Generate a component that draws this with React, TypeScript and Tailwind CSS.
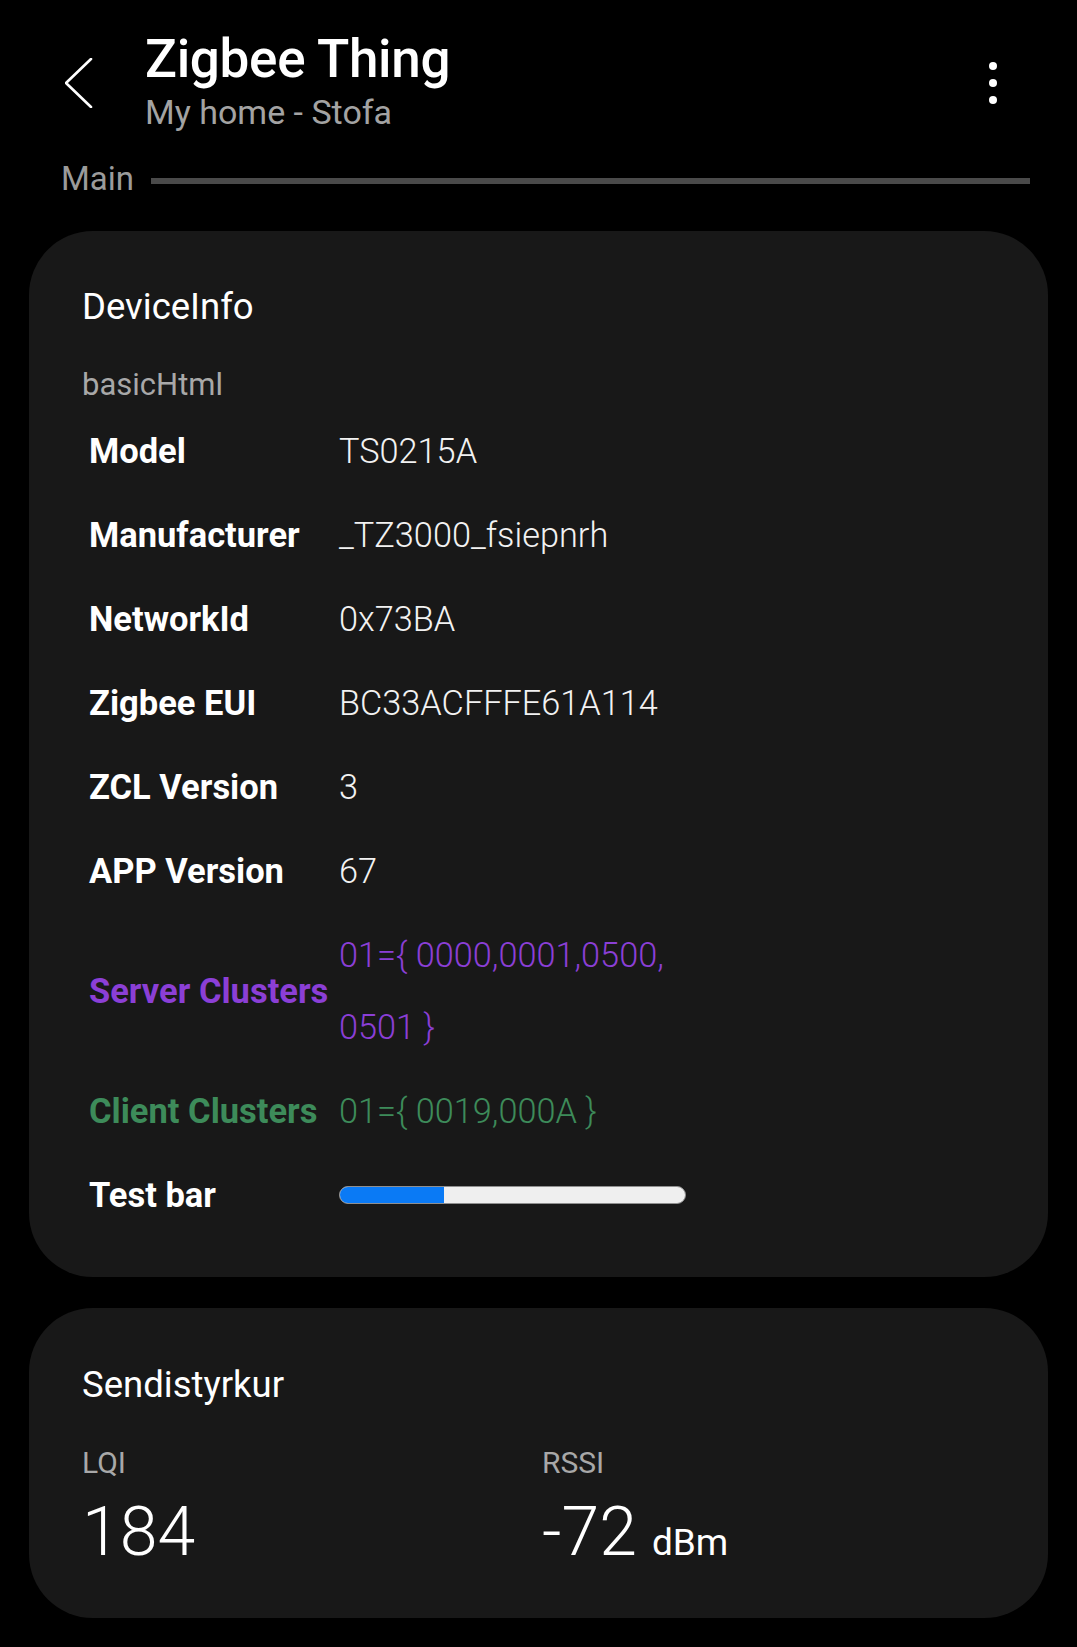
import React from "react";

type Row = {
  label: string;
  value: React.ReactNode;
  tone?: "purple" | "green";
};

const rows: Row[] = [
  { label: "Model", value: "TS0215A" },
  { label: "Manufacturer", value: "_TZ3000_fsiepnrh" },
  { label: "NetworkId", value: "0x73BA" },
  { label: "Zigbee EUI", value: "BC33ACFFFE61A114" },
  { label: "ZCL Version", value: "3" },
  { label: "APP Version", value: "67" },
  {
    label: "Server Clusters",
    value: (
      <>
        01={"{"} 0000,0001,0500,
        <br />
        0501 {"}"}
      </>
    ),
    tone: "purple",
  },
  { label: "Client Clusters", value: <>01={"{"} 0019,000A {"}"}</>, tone: "green" },
];

function InfoRow({ label, value, tone }: Row) {
  const labelColor =
    tone === "purple" ? "text-[#8b3fd6]" : tone === "green" ? "text-[#3d8b5a]" : "text-white";
  const valueColor =
    tone === "purple" ? "text-[#8b3fd6]" : tone === "green" ? "text-[#3d8b5a]" : "text-[#f2f2f2]";
  return (
    <div className="flex items-center py-[6px]">
      <div className={`w-[250px] shrink-0 text-[34.5px] leading-[72px] font-bold ${labelColor}`}>
        {label}
      </div>
      <div className={`text-[34.3px] leading-[72px] font-light ${valueColor}`}>{value}</div>
    </div>
  );
}

function TestBar({ percent }: { percent: number }) {
  return (
    <div className="h-[18px] w-[347px] overflow-hidden rounded-full border border-[#8f8f8f] bg-[#efefef]">
      <div className="h-full bg-[#0a7af5]" style={{ width: `${percent}%` }} />
    </div>
  );
}

export default function App() {
  return (
    <div className="min-h-[1647px] bg-black text-white font-['Roboto','Liberation_Sans',sans-serif]">
      {/* header */}
      <header className="relative flex pt-[29px]">
        <div className="flex w-[145px] shrink-0 justify-end pr-[52px] pt-[29px]">
          <svg width="28" height="50" viewBox="0 0 28 50" fill="none">
            <polyline
              points="26,1 1,25 26,49"
              stroke="white"
              strokeWidth="2.6"
              strokeLinecap="round"
              strokeLinejoin="round"
            />
          </svg>
        </div>
        <div className="flex-1">
          <h1 className="text-[53px] leading-[60px] font-medium tracking-[-0.3px]">Zigbee Thing</h1>
          <p className="mt-[3px] text-[34px] leading-[40px] text-[#a3a3a3]">My home - Stofa</p>
        </div>
        <div className="flex flex-col items-center gap-[9px] pr-[80px] pt-[33px]">
          <span className="h-[8px] w-[8px] rounded-full bg-white" />
          <span className="h-[8px] w-[8px] rounded-full bg-white" />
          <span className="h-[8px] w-[8px] rounded-full bg-white" />
        </div>
      </header>

      {/* section label */}
      <div className="mt-[28px] flex items-center pl-[61px] pr-[47px]">
        <span className="text-[33px] leading-[38px] text-[#9b9b9b]">Main</span>
        <div className="ml-[17px] mt-[3px] h-[6px] flex-1 bg-[#4a4a4a]" />
      </div>

      {/* device info card */}
      <section className="mx-[29px] mt-[33px] rounded-[64px] bg-[#181818] px-[53px] pb-[40px] pt-[56px]">
        <h2 className="text-[36.5px] leading-[40px]">DeviceInfo</h2>
        <p className="mt-[40px] text-[31px] leading-[36px] text-[#a8a8a8]">basicHtml</p>
        <div className="mt-[6px] pl-[7px]">
          {rows.map((r) => (
            <InfoRow key={r.label} {...r} />
          ))}
          <div className="flex items-center py-[6px]">
            <div className="w-[250px] shrink-0 text-[34.5px] leading-[72px] font-bold">Test bar</div>
            <TestBar percent={30} />
          </div>
        </div>
      </section>

      {/* signal card */}
      <section className="mx-[29px] mt-[31px] rounded-[64px] bg-[#181818] px-[53px] pb-[41px] pt-[57px]">
        <h2 className="text-[36.5px] leading-[40px]">Sendistyrkur</h2>
        <div className="mt-[40px] flex">
          <div className="w-[460px]">
            <p className="text-[30px] leading-[36px] text-[#a8a8a8]">LQI</p>
            <p className="mt-[17px] text-[68px] leading-[68px] font-light">184</p>
          </div>
          <div>
            <p className="text-[30px] leading-[36px] text-[#a8a8a8]">RSSI</p>
            <p className="mt-[17px] flex items-baseline">
              <span className="text-[68px] leading-[68px] font-light">-72</span>
              <span className="ml-[15px] text-[37px] leading-[68px]">dBm</span>
            </p>
          </div>
        </div>
      </section>
    </div>
  );
}
